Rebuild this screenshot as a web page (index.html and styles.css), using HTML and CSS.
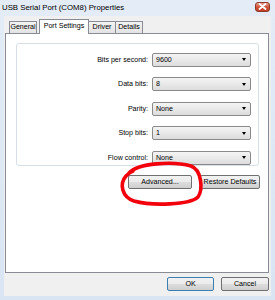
FILE: index.html
```html
<!DOCTYPE html>
<html lang="en">
<head>
    <meta charset="UTF-8">
    <title>USB Serial Port (COM8) Properties</title>
    <link rel="stylesheet" href="styles.css">
</head>
<body>
    <div class="window">
        <div class="titlebar">
            <span class="title">USB Serial Port (COM8) Properties</span>
            <span class="close">
                <svg width="9" height="7" viewBox="0 0 9 7">
                    <path d="M1.5 1 L7.5 6 M7.5 1 L1.5 6" stroke="#fff" stroke-width="1.8" stroke-linecap="round"/>
                </svg>
            </span>
        </div>

        <div class="client">
            <div class="tabs">
                <div class="tab tab-general">General</div>
                <div class="tab tab-port active">Port Settings</div>
                <div class="tab tab-driver">Driver</div>
                <div class="tab tab-details">Details</div>
            </div>

            <div class="panel">
                <div class="group">
                    <label>Bits per second:</label>
                    <div class="combo"><span>9600</span><i class="arrow"></i></div>
                    <label>Data bits:</label>
                    <div class="combo"><span>8</span><i class="arrow"></i></div>
                    <label>Parity:</label>
                    <div class="combo"><span>None</span><i class="arrow"></i></div>
                    <label>Stop bits:</label>
                    <div class="combo"><span>1</span><i class="arrow"></i></div>
                    <label>Flow control:</label>
                    <div class="combo"><span>None</span><i class="arrow"></i></div>
                </div>
                <div class="panel-buttons">
                    <button class="btn advanced">Advanced...</button>
                    <button class="btn restore">Restore Defaults</button>
                </div>
            </div>

            <div class="dialog-buttons">
                <button class="btn ok">OK</button>
                <button class="btn cancel">Cancel</button>
            </div>
        </div>

        <!-- red marker drawn over the Advanced button -->
        <svg class="scribble" width="275" height="300" viewBox="0 0 275 300">
            <path d="M129 173 C138 163 173 161 191 166 C202 170 203 190 198 197 C190 205 152 206 134 201 C122 197 119 184 126 176 C128 174 130 172 133 171"
                  fill="none" stroke="#f2000c" stroke-width="3.6" stroke-linecap="round"/>
        </svg>
    </div>
</body>
</html>
```

FILE: styles.css
```css
body {
    margin: 0;
    padding: 0;
    font-family: "Liberation Sans", Arial, sans-serif;
    font-size: 7.1px;
    color: #000;
    background: #fff;
}
.window {
    position: relative;
    width: 275px;
    height: 300px;
    box-sizing: border-box;
    padding: 0 4px 4px 4px;
    background: linear-gradient(#e3ecf7, #d9e5f3);
}
.titlebar {
    display: flex;
    align-items: center;
    justify-content: space-between;
    height: 16px;
    margin: 0 -2px 0 -2px;
}
.title {
    font-size: 7.8px;
    margin-top: -1px;
}
.close {
    display: flex;
    align-items: center;
    justify-content: center;
    width: 15px;
    height: 10px;
    margin-top: -3px;
    margin-right: 3px;
    box-sizing: border-box;
    border: 1px solid #8e3a2a;
    border-radius: 3px;
    background: linear-gradient(#e9a08c, #d0543b 50%, #c23c22);
}
.client {
    height: 280px;
    box-sizing: border-box;
    padding: 3px 2px 0 1px;
    background: #f0f0f0;
}
.tabs {
    display: flex;
    align-items: flex-end;
    padding-left: 4px;
    height: 14px;
}
.tab {
    height: 12px;
    line-height: 11px;
    text-align: center;
    box-sizing: border-box;
    border: 1px solid #898c95;
    border-bottom: none;
    border-left: none;
    background: linear-gradient(#f3f3f3, #e3e3e3);
}
.tab-general {
    width: 28px;
    border-left: 1px solid #898c95;
    margin-right: 2px;
}
.tab-port {
    width: 50px;
}
.tab-driver {
    width: 27px;
}
.tab-details {
    width: 27px;
}
.tab.active {
    position: relative;
    height: 15px;
    line-height: 12px;
    margin-bottom: -1px;
    background: #fff;
    border-left: 1px solid #898c95;
    z-index: 1;
}
.panel {
    height: 240px;
    box-sizing: border-box;
    padding: 9px 9px 0 10px;
    border: 1px solid #898c95;
    background: #fff;
}
.group {
    display: grid;
    grid-template-columns: 1fr 99px;
    column-gap: 4px;
    row-gap: 9.5px;
    align-items: center;
    height: 123px;
    box-sizing: border-box;
    padding: 8px 7px 0 0;
    border: 1px solid #d5dfe5;
    border-radius: 3px;
}
.group label {
    text-align: right;
}
.combo {
    display: flex;
    align-items: center;
    justify-content: space-between;
    height: 14px;
    box-sizing: border-box;
    padding: 0 4px 0 3px;
    border: 1px solid #8a8a8a;
    border-radius: 2px;
    background: linear-gradient(#f4f4f4, #e9e9e9 50%, #dcdcdc);
}
.arrow {
    width: 0;
    height: 0;
    border-left: 2.5px solid transparent;
    border-right: 2.5px solid transparent;
    border-top: 3px solid #000;
}
.panel-buttons {
    display: flex;
    justify-content: flex-end;
    gap: 8px;
    margin-top: 9px;
    margin-right: -1px;
}
.btn {
    height: 14px;
    padding: 0;
    font-family: inherit;
    font-size: 7.1px;
    color: #000;
    box-sizing: border-box;
    border: 1px solid #707070;
    border-radius: 2px;
    background: linear-gradient(#f2f2f2, #ebebeb 50%, #dddddd 51%, #cfcfcf);
}
.advanced {
    width: 64px;
}
.restore {
    width: 60px;
}
.dialog-buttons {
    display: flex;
    justify-content: flex-end;
    gap: 7px;
    margin-top: 4px;
}
.ok {
    width: 47px;
    border-color: #3c7fb1;
}
.cancel {
    width: 48px;
}
.scribble {
    position: absolute;
    top: 0;
    left: 0;
    pointer-events: none;
}
```
